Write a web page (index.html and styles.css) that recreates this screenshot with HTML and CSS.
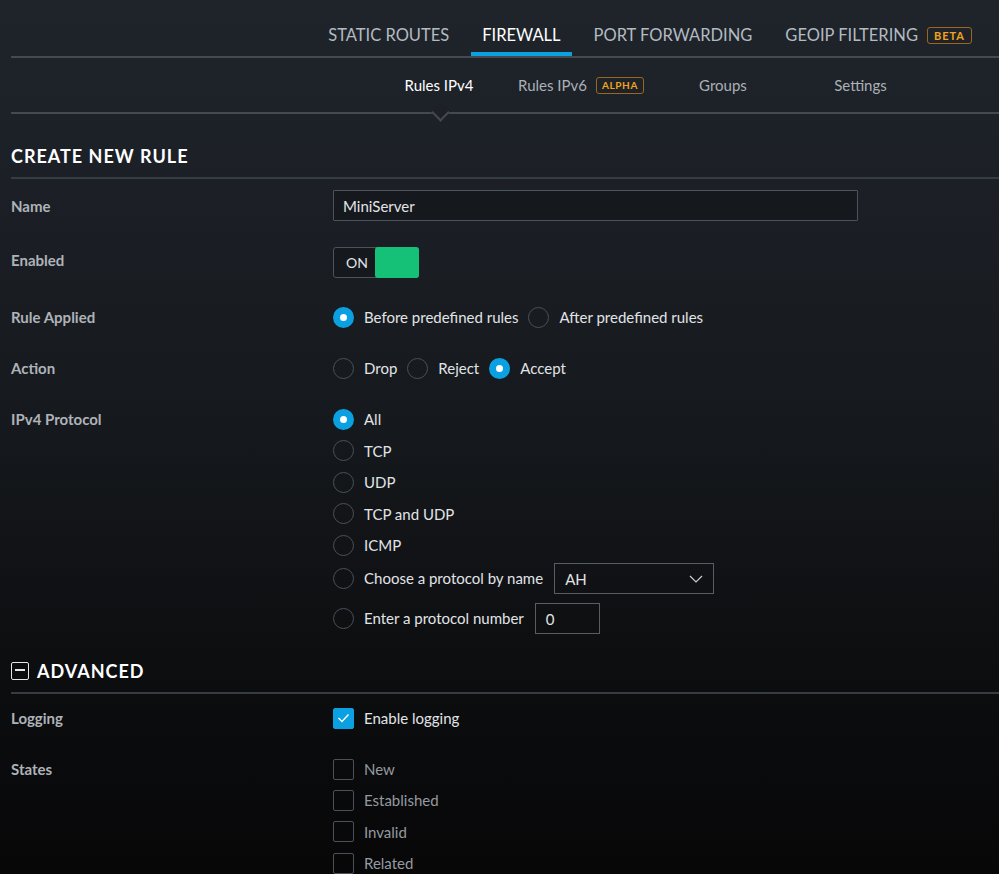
FILE: index.html
```html
<!DOCTYPE html>
<html lang="en">
<head>
    <meta charset="UTF-8">
    <meta name="viewport" content="width=device-width, initial-scale=1.0">
    <title>Firewall - Create New Rule</title>
    <link rel="stylesheet" href="styles.css">
</head>
<body>
    <nav class="topnav">
        <a href="#">Static Routes</a>
        <a href="#" class="active">Firewall</a>
        <a href="#">Port Forwarding</a>
        <a href="#">GeoIP Filtering <span class="badge">BETA</span></a>
    </nav>

    <nav class="subnav">
        <a href="#" class="active">Rules IPv4</a>
        <a href="#">Rules IPv6 <span class="badge">ALPHA</span></a>
        <a href="#">Groups</a>
        <a href="#">Settings</a>
    </nav>

    <section class="section">
        <h2 class="section-title">Create New Rule</h2>

        <div class="form">
            <div class="row row-name">
                <div class="label">Name</div>
                <input class="text-input" type="text" value="MiniServer">
            </div>

            <div class="row row-enabled">
                <div class="label">Enabled</div>
                <div class="toggle">
                    <span class="toggle-text">ON</span>
                    <span class="toggle-knob"></span>
                </div>
            </div>

            <div class="row row-applied">
                <div class="label">Rule Applied</div>
                <div class="inline">
                    <label class="opt"><span class="radio on"></span>Before predefined rules</label>
                    <label class="opt"><span class="radio"></span>After predefined rules</label>
                </div>
            </div>

            <div class="row">
                <div class="label">Action</div>
                <div class="inline">
                    <label class="opt"><span class="radio"></span>Drop</label>
                    <label class="opt"><span class="radio"></span>Reject</label>
                    <label class="opt"><span class="radio on"></span>Accept</label>
                </div>
            </div>

            <div class="row">
                <div class="label label-list">IPv4 Protocol</div>
                <div class="list">
                    <label class="opt"><span class="radio on"></span>All</label>
                    <label class="opt"><span class="radio"></span>TCP</label>
                    <label class="opt"><span class="radio"></span>UDP</label>
                    <label class="opt"><span class="radio"></span>TCP and UDP</label>
                    <label class="opt"><span class="radio"></span>ICMP</label>
                    <label class="opt opt-select">
                        <span class="radio"></span>Choose a protocol by name
                        <span class="select">
                            AH
                            <svg width="14" height="8" viewBox="0 0 14 8"><path d="M1 1l6 6 6-6" fill="none" stroke="#c9cdd1" stroke-width="1.2"/></svg>
                        </span>
                    </label>
                    <label class="opt opt-number">
                        <span class="radio"></span>Enter a protocol number
                        <span class="number">0</span>
                    </label>
                </div>
            </div>
        </div>

        <h2 class="section-title advanced">
            <span class="collapse-icon"></span>Advanced
        </h2>

        <div class="form form-advanced">
            <div class="row row-logging">
                <div class="label">Logging</div>
                <label class="opt"><span class="check on"><svg width="13" height="10" viewBox="0 0 13 10"><path d="M1.5 5l3.5 3.5 6.5-7" fill="none" stroke="#fff" stroke-width="1.4"/></svg></span>Enable logging</label>
            </div>

            <div class="row">
                <div class="label label-list">States</div>
                <div class="list states">
                    <label class="opt"><span class="check"></span>New</label>
                    <label class="opt"><span class="check"></span>Established</label>
                    <label class="opt"><span class="check"></span>Invalid</label>
                    <label class="opt"><span class="check"></span>Related</label>
                </div>
            </div>
        </div>
    </section>
</body>
</html>
```

FILE: styles.css
```css
* {
    box-sizing: border-box;
}

body {
    margin: 0;
    min-height: 100vh;
    background: linear-gradient(180deg, #1f242b 0%, #1b1f25 25%, #15181c 50%, #0d0e10 75%, #070708 100%);
    font-family: Lato, "Open Sans", sans-serif;
    font-size: 15px;
    color: #e1e4e7;
}

a {
    text-decoration: none;
}

/* top level tabs */
.topnav {
    display: flex;
    justify-content: flex-end;
    height: 58px;
    margin-left: 11px;
    padding-right: 16px;
    border-bottom: 2px solid #46494e;
}

.topnav a {
    display: flex;
    align-items: center;
    gap: 9px;
    margin-left: 11px;
    padding: 14px 11px 0;
    font-size: 16.5px;
    color: #b3bbc1;
    text-transform: uppercase;
}

.topnav a.active {
    color: #fff;
    box-shadow: inset 0 -4px 0 #0ba0e0;
}

.badge {
    display: inline-block;
    height: 17px;
    padding: 0 6px;
    border: 1px solid #9a6620;
    border-radius: 3px;
    font-size: 11px;
    font-weight: 700;
    line-height: 15px;
    letter-spacing: 1px;
    color: #f2a31b;
}

/* second level tabs */
.subnav {
    display: grid;
    grid-template-columns: 142px 142px 142px 133px;
    justify-content: end;
    height: 56px;
    margin-left: 11px;
    padding-right: 72px;
    border-bottom: 2px solid #46494e;
}

.subnav a {
    position: relative;
    display: flex;
    align-items: center;
    justify-content: center;
    gap: 9px;
    font-size: 15px;
    color: #aab1b7;
}

.subnav .badge {
    padding: 0 5px;
    font-size: 10px;
    letter-spacing: 0.6px;
}

.subnav a.active {
    color: #fff;
}

.subnav a.active::after {
    content: "";
    position: absolute;
    left: 50%;
    bottom: -7px;
    width: 11px;
    height: 11px;
    margin-left: -5px;
    background: #1d2127;
    border-right: 2px solid #46494e;
    border-bottom: 2px solid #46494e;
    transform: rotate(45deg);
}

/* form */
.section {
    padding-left: 11px;
}

.section-title {
    margin: 31px 0 0;
    padding-bottom: 10px;
    border-bottom: 2px solid #363c44;
    font-size: 18px;
    font-weight: 700;
    line-height: 22px;
    letter-spacing: 1px;
    color: #fff;
    text-transform: uppercase;
}

.form {
    display: flex;
    flex-direction: column;
    gap: 20px;
    padding-top: 11px;
}

.row {
    display: grid;
    grid-template-columns: 322px 1fr;
    align-items: center;
}

.row-enabled {
    margin-top: 6px;
}

.row-enabled .label {
    margin-top: -5px;
}

.row-applied {
    margin-top: 3.5px;
}

.label {
    font-weight: 700;
    color: #aeb3b8;
}

.label-list {
    align-self: start;
    line-height: 31.5px;
}

.text-input {
    width: 525px;
    height: 31px;
    padding: 0 9px;
    background: #15181c;
    border: 1px solid #4b535b;
    border-radius: 1px;
    font-family: inherit;
    font-size: 15px;
    color: #e1e4e7;
    outline: none;
}

.toggle {
    display: flex;
    width: 86px;
    height: 31px;
    border: 1px solid #4b535b;
    border-radius: 3px;
    background: #15181c;
}

.toggle-text {
    width: 41px;
    padding-left: 12px;
    line-height: 29px;
    font-size: 14px;
}

.toggle-knob {
    flex: 1;
    margin: -1px -1px -1px 0;
    background: #14c177;
    border-radius: 3px;
}

.inline {
    display: flex;
    gap: 10px;
}

.list {
    display: flex;
    flex-direction: column;
}

.list .opt {
    height: 31.5px;
}

.list .opt-select {
    height: 34.5px;
}

.list .opt-number {
    height: 31px;
    margin-top: 7px;
}

.opt {
    display: flex;
    align-items: center;
    height: 31px;
    white-space: nowrap;
}

.radio {
    flex: none;
    width: 21px;
    height: 21px;
    margin-right: 10px;
    border: 1.5px solid #4b5158;
    border-radius: 50%;
}

.radio.on {
    border: 7px solid #0ba0e2;
    background: #fff;
}

.check {
    flex: none;
    display: flex;
    align-items: center;
    justify-content: center;
    width: 21px;
    height: 21px;
    margin-right: 10px;
    border: 1.5px solid #4b5158;
    border-radius: 2px;
}

.check.on {
    background: #0ba0e2;
    border-color: #0ba0e2;
}

.select {
    display: flex;
    align-items: center;
    justify-content: space-between;
    width: 160px;
    height: 31px;
    margin-left: 11px;
    padding: 2px 10px 0 10px;
    border: 1px solid #565d65;
    font-size: 15px;
}

.number {
    width: 65px;
    height: 31px;
    margin-left: 11px;
    padding: 2px 0 0 10px;
    border: 1px solid #565d65;
    line-height: 27px;
}

/* advanced block */
.advanced {
    display: flex;
    align-items: center;
    gap: 8px;
    margin-top: 26px;
}

.collapse-icon {
    position: relative;
    width: 18px;
    height: 18px;
    border: 1.5px solid #e6e8ea;
    border-radius: 2px;
}

.collapse-icon::after {
    content: "";
    position: absolute;
    left: 3px;
    right: 3px;
    top: 6.5px;
    height: 1.5px;
    background: #e6e8ea;
}

.form-advanced {
    padding-top: 9px;
}

.states {
    color: #959aa0;
}

.states .opt {
    height: 31.3px;
}
```
